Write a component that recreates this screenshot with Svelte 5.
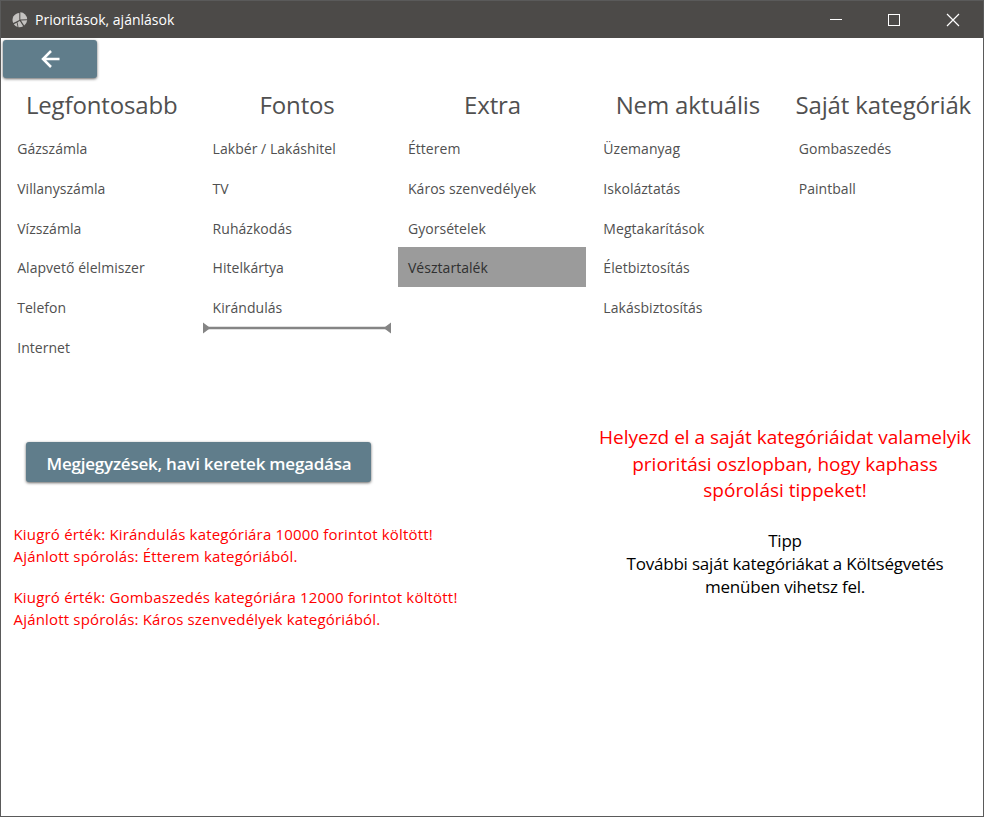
<script>
  const columns = [
    { title: 'Legfontosabb', items: ['Gázszámla', 'Villanyszámla', 'Vízszámla', 'Alapvető élelmiszer', 'Telefon', 'Internet'] },
    { title: 'Fontos', items: ['Lakbér / Lakáshitel', 'TV', 'Ruházkodás', 'Hitelkártya', 'Kirándulás'], drop: true },
    { title: 'Extra', items: ['Étterem', 'Káros szenvedélyek', 'Gyorsételek', 'Vésztartalék'] },
    { title: 'Nem aktuális', items: ['Üzemanyag', 'Iskoláztatás', 'Megtakarítások', 'Életbiztosítás', 'Lakásbiztosítás'] },
    { title: 'Saját kategóriák', items: ['Gombaszedés', 'Paintball'] },
  ];
  const selected = 'Vésztartalék';
  const alerts = [
    ['Kiugró érték: Kirándulás kategóriára 10000 forintot költött!', 'Ajánlott spórolás: Étterem kategóriából.'],
    ['Kiugró érték: Gombaszedés kategóriára 12000 forintot költött!', 'Ajánlott spórolás: Káros szenvedélyek kategóriából.'],
  ];
</script>

<div class="window">
  <header>
    <svg class="logo" width="16" height="16" viewBox="0 0 16 16" fill="#c4c2c0">
      <path d="M7.300 1V8L1.200 11A7 7 0 0 1 7.300 1Z" />
      <path d="M8.300.3A7.300 7.300 0 0 1 15.200 7.300L8.300 7.500Z" />
      <path d="M15.200 8.200A7.400 7.400 0 0 1 12.200 13.400L9 8.400Z" />
      <path d="M7.800 9 11.200 14.200A7 7 0 0 1 6.500 15.300L5.500 10.300Z" />
      <path d="M4.700 10.700 5.600 15A7 7 0 0 1 1.800 12.200Z" />
    </svg>
    <span class="caption">Prioritások, ajánlások</span>
    <svg class="controls" width="140" height="20" viewBox="0 0 140 20" fill="none" stroke="#fff" shape-rendering="crispEdges">
      <path d="M5 8.500h12M63.500 3.500h11v11h-11z" transform="translate(0 1)" />
      <path d="m122 4 12 12m0-12-12 12" shape-rendering="auto" stroke-width="1.2" />
    </svg>
  </header>

  <button class="back" aria-label="Vissza">
    <svg width="20" height="18" viewBox="0 0 20 18" fill="none" stroke="#fff" stroke-width="2.5">
      <path d="M19.500 9H3M11 1 3 9l8 8" />
    </svg>
  </button>

  <main class="columns">
    {#each columns as column}
      <section>
        <h2>{column.title}</h2>
        <ul>
          {#each column.items as item}
            <li class:selected={item === selected}>{item}</li>
          {/each}
        </ul>
        {#if column.drop}
          <svg class="drop" width="188" height="12" viewBox="0 0 188 12" fill="#858585">
            <path d="M0 .5 6 5v2L0 11.500ZM188 .5 182 5v2l6 4.500Z" />
            <path d="M5 4.700h178v2.600H5z" />
          </svg>
        {/if}
      </section>
    {/each}
  </main>

  <div class="lower">
    <div class="left">
      <button class="notes">Megjegyzések, havi keretek megadása</button>
      {#each alerts as lines}
        <p class="alert">{lines[0]}<br />{lines[1]}</p>
      {/each}
    </div>
    <aside>
      <p class="hint">Helyezd el a saját kategóriáidat valamelyik<br />prioritási oszlopban, hogy kaphass<br />spórolási tippeket!</p>
      <p class="tip">Tipp<br />További saját kategóriákat a Költségvetés<br />menüben vihetsz fel.</p>
    </aside>
  </div>
</div>

<style>
  .window {
    box-sizing: border-box;
    width: 984px;
    height: 817px;
    border: 1px solid #5a5a5a;
    background: #fff;
    font-family: 'Open Sans', 'Noto Sans', sans-serif;
    overflow: hidden;
    display: flex;
    flex-direction: column;
  }
  header {
    flex: none;
    height: 37px;
    background: #4c4a48;
    display: flex;
    align-items: center;
    padding: 0 18px 0 11px;
    color: #fff;
  }
  .caption {
    margin-left: 7px;
    font-size: 14px;
    flex: 1;
    white-space: nowrap;
  }
  button {
    border: 0;
    padding: 0;
    background: #607d8b;
    color: #fff;
    font-family: inherit;
    border-radius: 3px;
    box-shadow: 0 1px 3px rgba(0, 0, 0, 0.6);
    display: flex;
    align-items: center;
    justify-content: center;
  }
  .back {
    flex: none;
    width: 94px;
    height: 38px;
    margin: 2px 0 0 2px;
  }
  .columns {
    display: grid;
    grid-template-columns: repeat(5, 195.4px);
    margin: 8px 0 0 3px;
    height: 336px;
    flex: none;
  }
  section {
    min-width: 0;
    display: flex;
    flex-direction: column;
    align-items: center;
  }
  h2 {
    margin: 0;
    height: 42.2px;
    line-height: 38px;
    font-weight: 400;
    font-size: 24px;
    letter-spacing: -0.15px;
    color: #505050;
    white-space: nowrap;
  }
  ul {
    list-style: none;
    margin: 0;
    padding: 0;
    width: 188px;
  }
  li {
    height: 39.75px;
    line-height: 42px;
    padding-left: 9.5px;
    font-size: 14px;
    letter-spacing: 0.04px;
    color: #505050;
    white-space: nowrap;
  }
  li.selected {
    background: #9b9b9b;
    color: #303030;
  }
  .drop {
    margin-top: -5.4px;
  }
  .lower {
    display: flex;
    justify-content: space-between;
  }
  .left {
    padding: 20px 0 0 12.500px;
  }
  .notes {
    width: 345px;
    height: 40px;
    margin: 0 0 41px 12.500px;
    padding: 3px 0 0 1px;
    box-sizing: border-box;
    font-size: 17px;
    font-weight: 600;
    letter-spacing: -0.23px;
    white-space: nowrap;
  }
  .alert {
    margin: 0 0 19px;
    color: #f00;
    font-size: 15px;
    letter-spacing: 0.18px;
    line-height: 22px;
    white-space: nowrap;
  }
  aside {
    width: 396px;
    padding-top: 2px;
    text-align: center;
    white-space: nowrap;
  }
  .hint {
    margin: 0 0 25px;
    color: #f00;
    font-size: 19px;
    line-height: 26.500px;
  }
  .tip {
    margin: 0;
    color: #000;
    font-size: 17px;
    letter-spacing: -0.2px;
    line-height: 23px;
  }
</style>
